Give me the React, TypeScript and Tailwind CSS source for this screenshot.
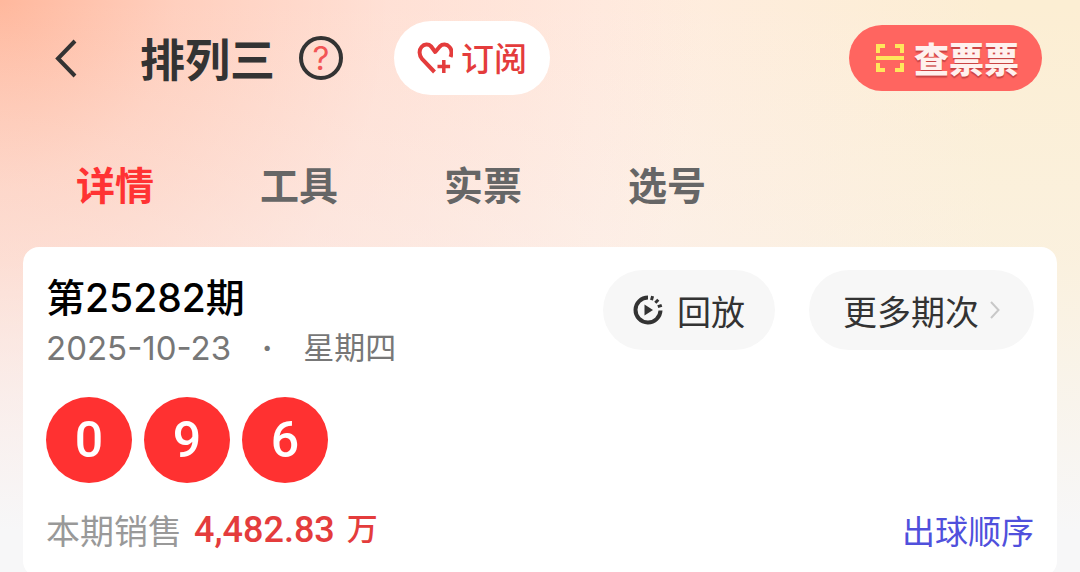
import { useState } from "react";

const tabs = ["详情", "工具", "实票", "选号"];
const balls = [0, 9, 6];

function BackIcon() {
  return (
    <svg width="24" height="40" viewBox="0 0 24 40" fill="none" aria-hidden="true">
      <path d="M21 3 4 20.500 21 38" stroke="#333" strokeWidth="4" />
    </svg>
  );
}

function HeartPlusIcon() {
  return (
    <svg width="36" height="32" viewBox="0 0 36 32" fill="none" stroke="#e43c3c" strokeWidth="4" aria-hidden="true">
      <path
        d="M17.500 30 5 16.800C2 13.500 1.800 8 4.500 5c2.700-3 7-3.200 9.700-.5L18.200 10l4.600-5.500c2.700-2.700 7-2.500 9.700.5 2.200 2.500 2.500 6.500 1 10"
        strokeLinejoin="round"
      />
      <path d="M26.800 18v13M20.500 24.500h12.600" strokeWidth="3.500" />
    </svg>
  );
}

function ScanIcon() {
  return (
    <svg width="28" height="28" viewBox="0 0 28 28" fill="none" stroke="#ffe65c" strokeWidth="4" aria-hidden="true">
      <path d="M2 9V2h7M19 2h7v7M26 19v7h-7M9 26H2v-7M0 14h28" />
    </svg>
  );
}

function ReplayIcon() {
  return (
    <svg width="30" height="30" viewBox="0 0 30 30" fill="none" stroke="#333" aria-hidden="true">
      <path d="M15 2.500A12.500 12.500 0 1 0 27.500 15.500" strokeWidth="4" />
      <path d="m18.500 5.200 1.100-4M22.300 7.700l3-3M24.800 11.700l4-1.400" strokeWidth="3" />
      <path d="M11.500 9.500v11l8.500-5.500z" fill="#333" stroke="none" />
    </svg>
  );
}

function ArrowIcon() {
  return (
    <svg width="10" height="18" viewBox="0 0 10 18" fill="none" aria-hidden="true">
      <path d="m1 1 7.500 8L1 17" stroke="#c8c8c8" strokeWidth="2" />
    </svg>
  );
}

export default function App() {
  const [activeTab, setActiveTab] = useState("详情");

  return (
    <div className="min-h-screen bg-[linear-gradient(to_bottom,transparent_0%,#f7f7f84d_45%,#f7f7f8_92%),radial-gradient(ellipse_65%_130%_at_0%_0%,#ffb89d_0%,#ffcab7cc_25%,#ffd9cd80_55%,transparent_100%),linear-gradient(to_right,#ffe0d7_0%,#ffece1_55%,#fceed3_92%,#fceed3_100%)] font-['Noto_Sans_CJK_SC',sans-serif]">
      <header className="flex items-center pt-[21px] pr-[38px] pl-[54px]">
        <button type="button" aria-label="返回" className="pr-[62px]">
          <BackIcon />
        </button>
        <h1 className="text-[45px] leading-[60px] font-bold text-[#333]">排列三</h1>
        <button
          type="button"
          aria-label="玩法说明"
          className="ml-6 flex size-11 items-center justify-center rounded-full border-4 border-[#333] font-['Inter',sans-serif] text-[33px] leading-8 text-[#f25555]"
        >
          ?
        </button>
        <button
          type="button"
          className="ml-[51px] flex h-[74px] items-center gap-2 rounded-full bg-white px-[23px] text-[33px] font-medium text-[#e43c3c]"
        >
          <HeartPlusIcon />
          订阅
        </button>
        <button
          type="button"
          className="ml-auto flex h-[66px] items-center gap-2.5 rounded-full bg-[#ff6560] pr-[23px] pl-[27px] text-[35px] font-black text-[#fff1ee] text-shadow-[0_2px_1px_#c94444]"
        >
          <ScanIcon />
          查票票
        </button>
      </header>

      <nav className="flex gap-[106px] px-19 pt-[61px]">
        {tabs.map((tab) => (
          <button
            key={tab}
            type="button"
            onClick={() => setActiveTab(tab)}
            className={`text-[39px] leading-[54px] font-bold ${
              tab === activeTab ? "text-[#ff3333]" : "text-[#666]"
            }`}
          >
            {tab}
          </button>
        ))}
      </nav>

      <main className="mx-[23px] mt-[37px] rounded-2xl bg-white p-[23px]">
        <div className="flex items-start">
          <div className="font-['Inter','Noto_Sans_CJK_SC',sans-serif]">
            <h2 className="text-[39px] leading-[56px] font-medium text-black">第25282期</h2>
            <p className="flex text-[31px] leading-[44px] text-[#777]">
              <time dateTime="2025-10-23" className="text-[33px]">
                2025-10-23
              </time>
              <span className="w-18 text-center font-bold">·</span>
              <span>星期四</span>
            </p>
          </div>
          <button
            type="button"
            className="ml-auto flex h-20 items-center gap-[14px] rounded-full bg-[#f7f7f7] px-[30px] text-[34px] text-[#333]"
          >
            <ReplayIcon />
            回放
          </button>
          <button
            type="button"
            className="ml-[34px] flex h-20 items-center gap-[11px] rounded-full bg-[#f7f7f7] px-[34px] text-[34px] text-[#333]"
          >
            更多期次
            <ArrowIcon />
          </button>
        </div>

        <ul className="mt-[27px] flex gap-3">
          {balls.map((ball) => (
            <li
              key={ball}
              className="flex size-[86px] items-center justify-center rounded-full bg-[#ff3131] font-['Roboto',sans-serif] text-[50px] font-medium text-white"
            >
              {ball}
            </li>
          ))}
        </ul>

        <div className="mt-[23px] flex items-center justify-between leading-12">
          <p className="flex items-center gap-3 text-[34px] text-[#999]">
            本期销售
            <span className="flex gap-3 font-['Roboto','Noto_Sans_CJK_SC',sans-serif] font-medium text-[#e43c3c]">
              <span className="text-[36px]">4,482.83</span>
              <span className="text-[31px]">万</span>
            </span>
          </p>
          <a href="#order" className="text-[33px] text-[#5050dc]">
            出球顺序
          </a>
        </div>
      </main>
    </div>
  );
}
